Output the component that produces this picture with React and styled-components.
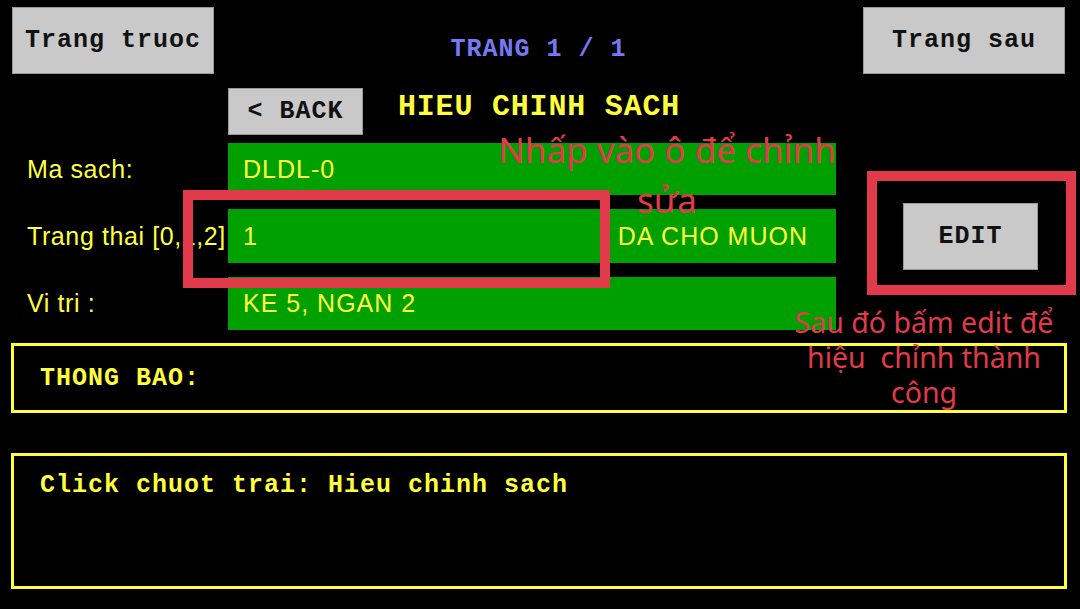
import styled, { createGlobalStyle } from "styled-components";

const GlobalStyle = createGlobalStyle`
  html, body {
    margin: 0;
    padding: 0;
    background: #000;
  }
  body {
    width: 1080px;
    height: 609px;
    overflow: hidden;
  }
`;

const MONO = `"Courier New", "Liberation Mono", monospace`;
const SANS = `"Liberation Sans", Arial, sans-serif`;
const YELLOW = "#ffff3c";
const RED = "#e13a4b";

const App = () => {
  return (
    <>
      <GlobalStyle />
      <Screen>
        <TopBar>
          <NavButton>Trang truoc</NavButton>
          <PageInfo>TRANG 1 / 1</PageInfo>
          <NavButton>Trang sau</NavButton>
        </TopBar>

        <TitleRow>
          <BackButton>&lt; BACK</BackButton>
          <Title>HIEU CHINH SACH</Title>
        </TitleRow>

        <Form>
          <Label>Ma sach:</Label>
          <Field>DLDL-0</Field>

          <Label>Trang thai [0,1,2]</Label>
          <Field>
            <span>1</span>
            <span>DA CHO MUON</span>
          </Field>
          <EditCell>
            <EditButton>EDIT</EditButton>
          </EditCell>

          <Label>Vi tri :</Label>
          <Field>KE 5, NGAN 2</Field>
        </Form>

        <MessageBox>THONG BAO:</MessageBox>
        <HelpBox>Click chuot trai: Hieu chinh sach</HelpBox>

        <Highlight $x={183} $y={190} $w={427} $h={98} />
        <Highlight $x={867} $y={171} $w={209} $h={124} />

        <Note $x={487} $y={125} $w={360} $size={35} $line={50}>
          {"Nhấp vào ô để chỉnh\nsửa"}
        </Note>
        <Note $x={774} $y={305} $w={300} $size={28.5} $line={35}>
          {"Sau đó bấm edit để\nhiệu  chỉnh thành\ncông"}
        </Note>
      </Screen>
    </>
  );
};

export default App;

const Screen = styled.div`
  position: relative;
  width: 1080px;
  height: 609px;
  box-sizing: border-box;
  padding-top: 7px;
  background: #000;
`;

const TopBar = styled.div`
  display: grid;
  grid-template-columns: 202px 1fr 202px;
  align-items: center;
  height: 67px;
  padding: 0 15px 0 12px;
`;

const GrayButton = styled.div`
  display: flex;
  align-items: center;
  justify-content: center;
  box-sizing: border-box;
  background: #c9c9c9;
  border: 1px solid #9a9a9a;
  color: #111;
  font-family: ${MONO};
  font-weight: bold;
  font-size: 25px;
  letter-spacing: 1px;
  white-space: pre;
`;

const NavButton = styled(GrayButton)`
  height: 67px;
`;

const PageInfo = styled.div`
  padding-top: 18px;
  text-align: center;
  color: #7878f4;
  font-family: ${MONO};
  font-weight: bold;
  font-size: 25px;
  letter-spacing: 1px;
  white-space: pre;
`;

const TitleRow = styled.div`
  display: flex;
  align-items: flex-start;
  gap: 35px;
  height: 47px;
  margin: 14px 0 0 228px;
`;

const BackButton = styled(GrayButton)`
  width: 135px;
  height: 47px;
`;

const Title = styled.div`
  line-height: 38px;
  color: ${YELLOW};
  font-family: ${MONO};
  font-weight: bold;
  font-size: 30px;
  letter-spacing: 0.8px;
`;

const Form = styled.div`
  display: grid;
  grid-template-columns: 201px 608px 1fr;
  grid-template-rows: 52px 54px 53px;
  row-gap: 14px;
  margin-top: 8px;
  padding-left: 27px;
`;

const Label = styled.div`
  grid-column: 1;
  display: flex;
  align-items: center;
  color: ${YELLOW};
  font-family: ${SANS};
  font-size: 25px;
  letter-spacing: 0.6px;
  white-space: nowrap;
`;

const Field = styled.div`
  grid-column: 2;
  display: flex;
  align-items: center;
  justify-content: space-between;
  padding: 0 28px 0 15px;
  background: #00a000;
  color: ${YELLOW};
  font-family: ${SANS};
  font-size: 25px;
  letter-spacing: 1px;
  white-space: nowrap;
`;

const EditCell = styled.div`
  grid-column: 3;
  grid-row: 2;
  display: flex;
  align-items: center;
  padding-left: 67px;
`;

const EditButton = styled(GrayButton)`
  width: 135px;
  height: 67px;
`;

const Panel = styled.div`
  box-sizing: border-box;
  margin: 0 13px 0 11px;
  border: 3px solid ${YELLOW};
  color: ${YELLOW};
  font-family: ${MONO};
  font-weight: bold;
  font-size: 25px;
  letter-spacing: 1px;
  white-space: pre;
`;

const MessageBox = styled(Panel)`
  display: flex;
  align-items: center;
  height: 70px;
  margin-top: 13px;
  padding-left: 26px;
`;

const HelpBox = styled(Panel)`
  height: 136px;
  margin-top: 40px;
  padding: 15px 26px;
`;

const Highlight = styled.div`
  position: absolute;
  left: ${(p) => p.$x}px;
  top: ${(p) => p.$y}px;
  width: ${(p) => p.$w}px;
  height: ${(p) => p.$h}px;
  box-sizing: border-box;
  border: 10px solid ${RED};
  pointer-events: none;
`;

const Note = styled.div`
  position: absolute;
  left: ${(p) => p.$x}px;
  top: ${(p) => p.$y}px;
  width: ${(p) => p.$w}px;
  text-align: center;
  color: ${RED};
  font-family: "Noto Sans", "Open Sans", sans-serif;
  font-size: ${(p) => p.$size}px;
  line-height: ${(p) => p.$line}px;
  white-space: pre;
  pointer-events: none;
`;
